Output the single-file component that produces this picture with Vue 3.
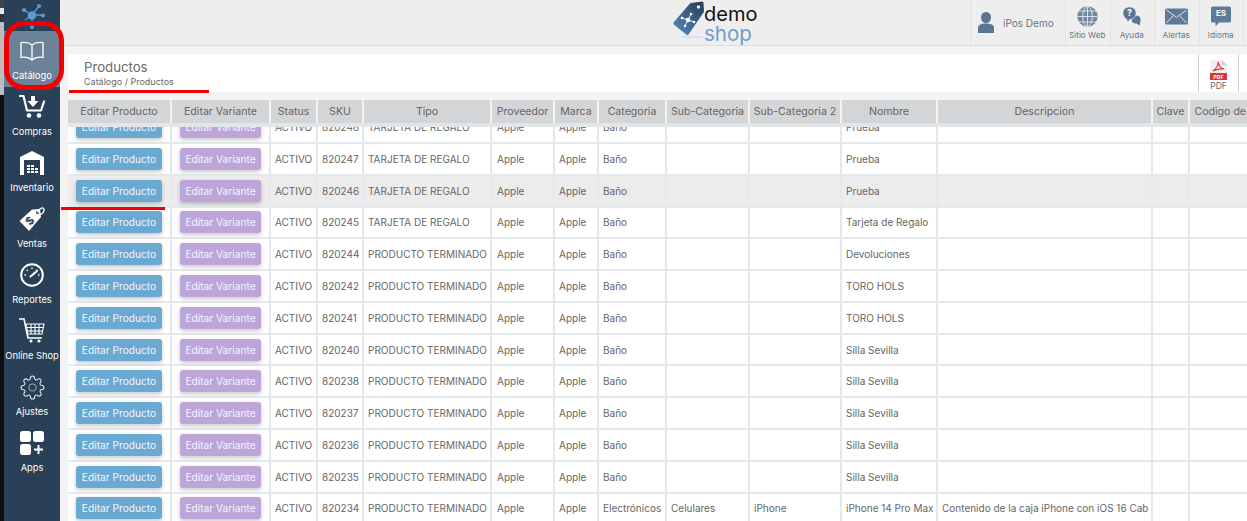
<template>
  <div class="app">
    <div class="desktop-strip">
      <div class="strip-top"></div>
      <div class="strip-mid"></div>
      <div class="strip-bottom"></div>
    </div>

    <aside class="sidebar">
      <div class="side-logo">
        <svg width="34" height="31" viewBox="0 0 34 31">
          <g stroke="#5b9bd0" stroke-width="1.4">
            <path d="M17 15 L9 10 M17 15 L24 6 M17 15 L27 15 M17 15 L17 26 M17 15 L10 20" />
          </g>
          <g fill="#5b9bd0">
            <circle cx="17" cy="15.5" r="4.2" />
            <circle cx="9" cy="10" r="2" />
            <circle cx="24" cy="6" r="2" />
            <circle cx="28" cy="15.5" r="2" />
            <circle cx="17" cy="27" r="2" />
          </g>
        </svg>
      </div>
      <div v-for="item in menu" :key="item.label" class="side-item" :class="{ active: item.active }">
        <div class="side-icon">
          <svg v-if="item.icon === 'book'" width="24" height="21" viewBox="0 0 24 21" fill="none" stroke="#fff" stroke-width="1.3">
            <path d="M12 4 C9 1.6 5 1 1 1.6 V16.4 C5 15.8 9 16.4 12 19 C15 16.4 19 15.8 23 16.4 V1.6 C19 1 15 1.6 12 4 Z M12 4 V19" />
          </svg>
          <svg v-else-if="item.icon === 'buy'" width="26" height="24" viewBox="0 0 26 24">
            <path d="M1 1 H4.5 L8 15.5 H22 L25 6.5" fill="none" stroke="#fff" stroke-width="2.2" stroke-linecap="round" stroke-linejoin="round" />
            <path d="M12 1 H16 V6 H19.5 L14 12 L8.5 6 H12 Z" fill="#fff" />
            <circle cx="10" cy="20.5" r="2.3" fill="#fff" />
            <circle cx="20" cy="20.5" r="2.3" fill="#fff" />
          </svg>
          <svg v-else-if="item.icon === 'house'" width="24" height="24" viewBox="0 0 24 24">
            <path d="M0 6 L12 0 L24 6 V24 H0 Z" fill="#fff" />
            <rect x="4" y="9" width="16" height="15" fill="#2a4056" />
            <path d="M7 14h3v2H7zM11 14h3v2h-3zM7 17h3v2H7zM11 17h3v2h-3zM15 17h3v2h-3zM7 20h3v2H7zM11 20h3v2h-3zM15 20h3v2h-3z" fill="#fff" />
          </svg>
          <svg v-else-if="item.icon === 'tag'" width="26" height="26" viewBox="0 0 26 26">
            <path d="M0.5 15 L13 3.5 L21 3 L22 11 L10 25 Z" fill="#fff" />
            <circle cx="18.5" cy="6.5" r="1.5" fill="#2a4056" />
            <path d="M18.5 6.5 C20 2 25 0 25 4 C25 7 22 9 20 8" fill="none" stroke="#fff" stroke-width="1.4" />
            <text x="11" y="18.5" class="tag-dollar" transform="rotate(-45 11 15)">$</text>
          </svg>
          <svg v-else-if="item.icon === 'gauge'" width="24" height="24" viewBox="0 0 24 24" fill="none" stroke="#fff">
            <circle cx="12" cy="12" r="10.8" stroke-width="2" />
            <path d="M4.5 12 H6 M6.7 6.7 L7.8 7.8 M12 4.5 V6 M17.3 6.7 L16.2 7.8 M19.5 12 H18" stroke-width="1.4" />
            <path d="M10.5 13.5 L17 8" stroke-width="2" stroke-linecap="round" />
          </svg>
          <svg v-else-if="item.icon === 'cart'" width="26" height="26" viewBox="0 0 26 26" fill="none" stroke="#fff">
            <path d="M0 1 H5 L9 20 H23" stroke-width="1.6" />
            <path d="M7 6 H25 L23 16 H9 Z M8 9.5 H24 M9 13 H24 M12 6 V16 M16 6 V16 M20 6 V16" stroke-width="1.1" />
            <circle cx="12" cy="23" r="1.6" fill="#fff" stroke="none" />
            <circle cx="20" cy="23" r="1.6" fill="#fff" stroke="none" />
          </svg>
          <svg v-else-if="item.icon === 'gear'" width="25" height="25" viewBox="0 0 24 24" fill="none" stroke="#e6ebef" stroke-width="1">
            <circle cx="12" cy="12" r="3.4" stroke="#8fa1b2" />
            <path d="M19.4 15a1.65 1.65 0 0 0 .33 1.82l.06.06a2 2 0 0 1 0 2.83 2 2 0 0 1-2.83 0l-.06-.06a1.65 1.65 0 0 0-1.82-.33 1.65 1.65 0 0 0-1 1.51V21a2 2 0 0 1-2 2 2 2 0 0 1-2-2v-.09A1.65 1.65 0 0 0 9 19.4a1.65 1.65 0 0 0-1.82.33l-.06.06a2 2 0 0 1-2.83 0 2 2 0 0 1 0-2.83l.06-.06a1.65 1.65 0 0 0 .33-1.82 1.65 1.65 0 0 0-1.51-1H3a2 2 0 0 1-2-2 2 2 0 0 1 2-2h.09A1.65 1.65 0 0 0 4.6 9a1.65 1.65 0 0 0-.33-1.82l-.06-.06a2 2 0 0 1 0-2.83 2 2 0 0 1 2.83 0l.06.06a1.65 1.65 0 0 0 1.82.33H9a1.65 1.65 0 0 0 1-1.51V3a2 2 0 0 1 2-2 2 2 0 0 1 2 2v.09a1.65 1.65 0 0 0 1 1.51 1.65 1.65 0 0 0 1.82-.33l.06-.06a2 2 0 0 1 2.83 0 2 2 0 0 1 0 2.83l-.06.06a1.65 1.65 0 0 0-.33 1.82V9a1.65 1.65 0 0 0 1.51 1H21a2 2 0 0 1 2 2 2 2 0 0 1-2 2h-.09a1.65 1.65 0 0 0-1.51 1z" />
          </svg>
          <svg v-else width="24" height="24" viewBox="0 0 24 24" fill="#fff">
            <rect x="0" y="0" width="11" height="11" rx="2.5" />
            <rect x="13" y="0" width="11" height="11" rx="2.5" />
            <rect x="0" y="13" width="11" height="11" rx="2.5" />
            <path d="M17.5 14 h2 v3.5 h3.5 v2 h-3.5 v3.5 h-2 v-3.5 h-3.5 v-2 h3.5 z" />
          </svg>
        </div>
        <span class="side-label">{{ item.label }}</span>
      </div>
    </aside>

    <main class="main">
      <header class="topbar">
        <div class="brand-wrap">
          <div class="brand">
            <svg class="brand-tag" width="32" height="38" viewBox="0 0 32 38">
              <defs>
                <linearGradient id="tagfill" x1="0" y1="1" x2="1" y2="0">
                  <stop offset="0" stop-color="#5590c8" />
                  <stop offset="0.55" stop-color="#3d5f84" />
                  <stop offset="1" stop-color="#2b3c4e" />
                </linearGradient>
              </defs>
              <ellipse cx="19" cy="36" rx="12" ry="1.3" fill="#d9e0e9" />
              <path d="M0.5 21.5 L17 2.5 Q17.5 2 18 2 L29 0.5 Q30.5 0.5 30.5 2 L31 10.5 Q31 11 30.5 11.5 L15.5 33.5 Q14.5 34.5 13.5 33.8 L0.8 23.5 Q0 22.5 0.5 21.5 Z" fill="url(#tagfill)" />
              <circle cx="25.5" cy="6" r="1.7" fill="#eee" />
              <g stroke="#fff" stroke-width="0.9">
                <path d="M15 19 L9 17 M15 19 L18 13 M15 19 L21 21 M15 19 L12 25" />
              </g>
              <g fill="#fff">
                <circle cx="15" cy="19" r="2.3" />
                <circle cx="9" cy="17" r="1.3" />
                <circle cx="18" cy="13" r="1.3" />
                <circle cx="21" cy="21" r="1.3" />
                <circle cx="12" cy="25" r="1.3" />
              </g>
            </svg>
            <div class="brand-text">
              <span class="brand-demo">demo</span>
              <span class="brand-shop">shop</span>
            </div>
          </div>
        </div>

        <div class="user">
          <svg width="16" height="21" viewBox="0 0 16 21" fill="#5b7490">
            <ellipse cx="8" cy="5.5" rx="5" ry="5.5" />
            <path d="M0 21 V16 C0 12.5 3.5 11.5 8 11.5 C12.5 11.5 16 12.5 16 16 V21 Z" />
          </svg>
          <span>iPos Demo</span>
        </div>

        <div class="tool">
          <svg width="21" height="21" viewBox="0 0 21 21" fill="none" stroke="#f0f2f4" stroke-width="0.8">
            <circle cx="10.5" cy="10.5" r="10.2" fill="#7388a0" stroke="none" />
            <ellipse cx="10.5" cy="10.5" rx="4.8" ry="10" />
            <path d="M10.5 0.5 V20.5 M0.5 10.5 H20.5 M2 5 H19 M2 16 H19" />
          </svg>
          <span>Sitio Web</span>
        </div>
        <div class="tool">
          <svg width="18" height="20" viewBox="0 0 18 20">
            <path d="M13 9 C17 9 18 12 17.5 14 C17.3 15 17 16 17 19 L13.5 17 C10 17 8 15 9 12 Z" fill="#5b7490" />
            <path d="M6.5 0.5 C10.5 0.5 13 3 13 6.5 C13 10.5 10 13 6.5 13 L5 16 L3.5 12.4 C1.5 11.5 0 9.5 0 6.5 C0 3 2.5 0.5 6.5 0.5 Z" fill="#5b7490" stroke="#eee" stroke-width="0.6" />
            <text x="6.5" y="9.5" class="help-mark">?</text>
          </svg>
          <span>Ayuda</span>
        </div>
        <div class="tool">
          <svg width="23" height="16" viewBox="0 0 23 16" fill="none">
            <rect width="23" height="16" rx="1.5" fill="#5f7a98" />
            <path d="M1.5 1.5 L11.5 9 L21.5 1.5 M1.5 14.5 L8.5 7 M21.5 14.5 L14.5 7" stroke="#eef1f4" stroke-width="0.9" />
          </svg>
          <span>Alertas</span>
        </div>
        <div class="tool">
          <svg width="20" height="20" viewBox="0 0 20 20">
            <path d="M1.5 0 H18.5 A1.5 1.5 0 0 1 20 1.5 V14.5 A1.5 1.5 0 0 1 18.5 16 H8 L4.5 20 V16 H1.5 A1.5 1.5 0 0 1 0 14.5 V1.5 A1.5 1.5 0 0 1 1.5 0 Z" fill="#5f7a98" />
            <text x="10" y="9.5" class="lang-code">ES</text>
          </svg>
          <span>Idioma</span>
        </div>
        <div class="topbar-end"></div>
      </header>

      <section class="title-card">
        <div class="title-text">
          <h1>Productos</h1>
          <p>Catálogo / Productos</p>
        </div>
        <div class="pdf-btn">
          <svg width="17" height="21" viewBox="0 0 17 21">
            <path d="M0 1 H12 L17 6 V21 H0 Z" fill="#eeeeee" />
            <path d="M12 1 L17 6 H12 Z" fill="#d4d4d4" />
            <rect y="14" width="17" height="7" fill="#e0313c" />
            <path d="M3 12 C6 10 8 6 8.3 3 C8.6 7 10 9 14 10 C10 9.6 6 10.5 3 12 Z" fill="none" stroke="#e0313c" stroke-width="1.1" />
            <text x="8.5" y="19.8" class="pdf-mark">PDF</text>
          </svg>
          <span>PDF</span>
        </div>
      </section>

      <section class="table">
        <div class="head">
          <div v-for="col in columns" :key="col" class="th">{{ col }}</div>
        </div>
        <div class="body">
          <div class="rows">
            <div v-for="row in rows" :key="row.sku" class="row" :class="{ selected: row.sku === '820246' }">
              <div class="td btn-cell"><button class="btn btn-product">Editar Producto</button></div>
              <div class="td btn-cell"><button class="btn btn-variant">Editar Variante</button></div>
              <div class="td">ACTIVO</div>
              <div class="td">{{ row.sku }}</div>
              <div class="td">{{ row.tipo }}</div>
              <div class="td pad">Apple</div>
              <div class="td">Apple</div>
              <div class="td">{{ row.cat || 'Baño' }}</div>
              <div class="td">{{ row.sub }}</div>
              <div class="td">{{ row.sub2 }}</div>
              <div class="td">{{ row.name }}</div>
              <div class="td">{{ row.desc }}</div>
              <div class="td"></div>
              <div class="td"></div>
            </div>
          </div>
        </div>
      </section>
    </main>

    <!-- red annotations drawn over the screenshot -->
    <div class="mark-ring"></div>
    <div class="mark-line mark-title"></div>
    <div class="mark-line mark-row"></div>
  </div>
</template>

<script setup>
const menu = [
  { label: 'Catálogo', icon: 'book', active: true },
  { label: 'Compras', icon: 'buy' },
  { label: 'Inventario', icon: 'house' },
  { label: 'Ventas', icon: 'tag' },
  { label: 'Reportes', icon: 'gauge' },
  { label: 'Online Shop', icon: 'cart' },
  { label: 'Ajustes', icon: 'gear' },
  { label: 'Apps', icon: 'apps' }
]

const columns = [
  'Editar Producto', 'Editar Variante', 'Status', 'SKU', 'Tipo', 'Proveedor', 'Marca', 'Categoria',
  'Sub-Categoria', 'Sub-Categoria 2', 'Nombre', 'Descripcion', 'Clave', 'Codigo de Barras'
]

const terminado = 'PRODUCTO TERMINADO'
const regalo = 'TARJETA DE REGALO'

const rows = [
  { sku: '820248', tipo: regalo, name: 'Prueba' },
  { sku: '820247', tipo: regalo, name: 'Prueba' },
  { sku: '820246', tipo: regalo, name: 'Prueba' },
  { sku: '820245', tipo: regalo, name: 'Tarjeta de Regalo' },
  { sku: '820244', tipo: terminado, name: 'Devoluciones' },
  { sku: '820242', tipo: terminado, name: 'TORO HOLS' },
  { sku: '820241', tipo: terminado, name: 'TORO HOLS' },
  { sku: '820240', tipo: terminado, name: 'Silla Sevilla' },
  { sku: '820238', tipo: terminado, name: 'Silla Sevilla' },
  { sku: '820237', tipo: terminado, name: 'Silla Sevilla' },
  { sku: '820236', tipo: terminado, name: 'Silla Sevilla' },
  { sku: '820235', tipo: terminado, name: 'Silla Sevilla' },
  {
    sku: '820234',
    tipo: terminado,
    cat: 'Electrónicos',
    sub: 'Celulares',
    sub2: 'iPhone',
    name: 'iPhone 14 Pro Max',
    desc: 'Contenido de la caja iPhone con iOS 16 Cab'
  }
]
</script>

<style>
html,
body {
  margin: 0;
  height: 100%;
  overflow: hidden;
}
</style>

<style scoped>
.app {
  position: relative;
  display: flex;
  height: 521px;
  overflow: hidden;
  font-family: Inter, "Open Sans", sans-serif;
  color: #666;
  --cols: 104px 99px 47px 46px 128px 63px 44px 68px 83px 92px 96px 215px 37px 98px;
}

.desktop-strip {
  width: 4px;
  flex: none;
  display: flex;
  flex-direction: column;
}

.strip-top {
  height: 22px;
  background: linear-gradient(#3f4450 0 8px, #e8e8e8 8px 14px, #30343c 14px);
}

.strip-mid {
  height: 73px;
  background: #bdbdbd;
}

.strip-bottom {
  flex: 1;
  background: #0e0e0e;
}

.sidebar {
  width: 56px;
  flex: none;
  background: #2a4056;
  display: flex;
  flex-direction: column;
}

.side-logo {
  height: 31px;
  display: flex;
  justify-content: center;
}

.side-item {
  height: 56px;
  flex: none;
  display: flex;
  flex-direction: column;
  align-items: center;
  padding-top: 7px;
  box-sizing: border-box;
}

.side-item.active {
  background: #6b8299;
}

.side-icon {
  height: 26px;
  display: flex;
  align-items: center;
  justify-content: center;
}

.side-icon svg {
  display: block;
}

.side-label {
  margin-top: 6px;
  font-size: 9.3px;
  line-height: 12px;
  color: #fff;
  white-space: nowrap;
}

.tag-dollar {
  font-size: 11px;
  font-weight: 700;
  fill: #2a4056;
  text-anchor: middle;
  font-family: Inter, sans-serif;
}

.main {
  flex: 1;
  min-width: 0;
  background: #f3f3f3;
  display: flex;
  flex-direction: column;
}

.topbar {
  height: 46px;
  flex: none;
  box-sizing: border-box;
  display: flex;
  background: #eeeeee;
  border-bottom: 1px solid #dedede;
}

.brand-wrap {
  width: 910px;
  flex: none;
  padding-left: 613px;
  box-sizing: border-box;
}

.brand {
  display: flex;
  align-items: flex-start;
  padding-top: 1px;
}

.brand-text {
  display: flex;
  flex-direction: column;
  margin-left: -1px;
  padding-top: 3px;
  line-height: 1;
}

.brand-demo {
  font-size: 20px;
  line-height: 20px;
  color: #111;
  font-weight: 400;
}

.brand-shop {
  font-size: 20.5px;
  line-height: 19px;
  color: #6f9fcb;
  font-weight: 400;
}

.user {
  width: 95px;
  flex: none;
  box-sizing: border-box;
  border-left: 1px solid #e2e2e2;
  display: flex;
  align-items: center;
  gap: 9px;
  padding-left: 7px;
  font-size: 10px;
  color: #66788a;
}

.tool {
  width: 44.5px;
  flex: none;
  box-sizing: border-box;
  border-left: 1px solid #e2e2e2;
  display: flex;
  flex-direction: column;
  align-items: center;
  padding: 6px 1px 0 0;
  font-size: 8.2px;
  color: #66788a;
  white-space: nowrap;
}

.tool svg {
  height: 21px;
  display: block;
}

.tool span {
  margin-top: 3px;
  line-height: 11px;
}

.topbar-end {
  flex: 1;
  border-left: 1px solid #e2e2e2;
}

.help-mark,
.lang-code {
  fill: #fff;
  font-family: Inter, sans-serif;
  font-weight: 700;
  text-anchor: middle;
}

.help-mark {
  font-size: 9px;
}

.lang-code {
  font-size: 8px;
}

.title-card {
  margin: 8px 0 8px 8px;
  height: 38px;
  flex: none;
  background: #fff;
  display: flex;
  justify-content: space-between;
}

.title-text {
  padding: 5px 0 0 16px;
}

.title-text h1 {
  margin: 0;
  font-size: 13.2px;
  line-height: 16px;
  font-weight: 400;
  color: #6a6a6a;
}

.title-text p {
  margin: 1px 0 0;
  font-size: 9px;
  line-height: 12px;
  color: #6a6a6a;
}

.pdf-btn {
  width: 41px;
  margin-right: 8px;
  box-sizing: border-box;
  border-left: 1px solid #d0d0d0;
  border-right: 1px solid #d0d0d0;
  display: flex;
  flex-direction: column;
  align-items: center;
  padding-top: 5px;
  font-size: 8.5px;
  line-height: 10px;
  color: #666;
}

.pdf-btn svg {
  display: block;
  margin-bottom: 1px;
}

.pdf-mark {
  font-size: 5px;
  font-weight: 700;
  fill: #fff;
  text-anchor: middle;
  font-family: Inter, sans-serif;
}

.table {
  margin-left: 8px;
  flex: 1;
  min-height: 0;
  display: flex;
  flex-direction: column;
  overflow: hidden;
}

.head {
  height: 23px;
  flex: none;
  display: grid;
  grid-template-columns: var(--cols);
}

.th {
  margin-right: 2px;
  padding-bottom: 1px;
  box-sizing: border-box;
  background: #d3d5d7;
  display: flex;
  align-items: center;
  justify-content: center;
  font-size: 10.6px;
  color: #666;
  white-space: nowrap;
  overflow: hidden;
}

.body {
  flex: 1;
  min-height: 0;
  overflow: hidden;
  border-top: 4px solid #e2e6e9;
}

/* the list is scrolled a little, the first row is cut off under the header */
.rows {
  margin-top: -14.7px;
}

.row {
  height: 31.78px;
  box-sizing: border-box;
  display: grid;
  grid-template-columns: var(--cols);
  background: #fff;
  border-bottom: 2px solid #e6e9ec;
}

.row.selected {
  background: #ececec;
}

.td {
  box-sizing: border-box;
  border-right: 2px solid #e6e9ec;
  padding-left: 4px;
  display: flex;
  align-items: center;
  font-size: 10px;
  color: #666;
  white-space: nowrap;
  overflow: hidden;
}

.td.pad {
  padding-left: 5px;
}

.btn-cell {
  padding-left: 8px;
  overflow: visible;
}

.btn {
  height: 22px;
  padding: 0;
  border: 0;
  border-radius: 3px;
  color: #f2f6fa;
  font-family: inherit;
  font-size: 10.2px;
  box-shadow: 0 2px 4px rgba(0, 0, 0, 0.22);
}

.btn-product {
  width: 86px;
  background: #69a9d2;
}

.btn-variant {
  width: 81px;
  background: #bda5da;
}

.mark-ring {
  position: absolute;
  left: 4px;
  top: 21px;
  width: 60px;
  height: 69px;
  box-sizing: border-box;
  border: 5px solid #f00000;
  border-radius: 20px;
}

.mark-line {
  position: absolute;
  height: 3px;
  background: #f00000;
}

.mark-title {
  left: 69px;
  top: 90px;
  width: 140px;
}

.mark-row {
  left: 61px;
  top: 207px;
  width: 104px;
}
</style>
